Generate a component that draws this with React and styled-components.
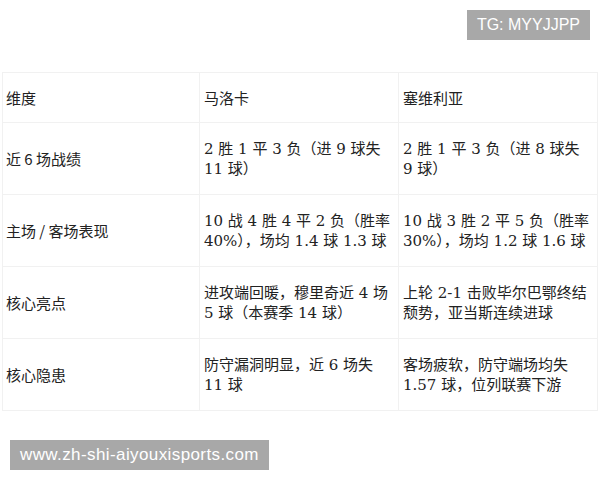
import React from 'react';
import styled, { createGlobalStyle } from 'styled-components';

const Global = createGlobalStyle`
  html, body {
    margin: 0;
    padding: 0;
    background: #fff;
  }
  body {
    width: 600px;
    height: 480px;
    overflow: hidden;
  }
`;

const Page = styled.div`
  display: flex;
  flex-direction: column;
  padding-top: 10px;
`;

const Mark = styled.div`
  align-self: ${p => (p.right ? 'flex-end' : 'flex-start')};
  margin: ${p => (p.right ? '0 10px 0 0' : '0 0 0 10px')};
  height: 30px;
  line-height: 30px;
  padding: 0 10px;
  background: #a8a8a8;
  color: #fff;
  font-family: 'Liberation Sans', Arial, sans-serif;
  font-size: ${p => (p.right ? '16px' : '17px')};
  letter-spacing: ${p => (p.right ? '0' : '0.4px')};
  white-space: nowrap;
`;

const Table = styled.table`
  margin: 32px 0 29px 2px;
  width: 595px;
  border-collapse: collapse;
  table-layout: fixed;
  color: #222;
`;

const Th = styled.th`
  height: 49px;
  padding: 0 4px 0 ${p => (p.first ? '3px' : '4px')};
  text-align: left;
  font-weight: normal;
  font-family: 'Noto Sans CJK SC', sans-serif;
  font-size: 15px;
  border: 1px solid #f1f1f1;
`;

const Label = styled.td`
  height: 71px;
  padding: 0 4px 0 3px;
  font-family: 'Noto Sans CJK SC', sans-serif;
  font-size: 15px;
  border: 1px solid #f1f1f1;
`;

const Td = styled.td`
  height: 71px;
  padding: 0 4px;
  font-family: 'DejaVu Serif', 'Noto Sans CJK SC', serif;
  font-size: 15px;
  line-height: 20px;
  border: 1px solid #f1f1f1;
`;

const rows = [
  ['近 6 场战绩', '2 胜 1 平 3 负（进 9 球失 11 球）', '2 胜 1 平 3 负（进 8 球失 9 球）'],
  ['主场 / 客场表现', '10 战 4 胜 4 平 2 负（胜率 40%），场均 1.4 球 1.3 球', '10 战 3 胜 2 平 5 负（胜率 30%），场均 1.2 球 1.6 球'],
  ['核心亮点', '进攻端回暖，穆里奇近 4 场 5 球（本赛季 14 球）', '上轮 2-1 击败毕尔巴鄂终结颓势，亚当斯连续进球'],
  ['核心隐患', '防守漏洞明显，近 6 场失 11 球', '客场疲软，防守端场均失 1.57 球，位列联赛下游'],
];

const App = () => (
  <Page>
    <Global />
    <Mark right>TG: MYYJJPP</Mark>
    <Table>
      <colgroup>
        <col style={{ width: 197 }} />
        <col style={{ width: 199 }} />
        <col style={{ width: 199 }} />
      </colgroup>
      <thead>
        <tr>
          <Th first>维度</Th>
          <Th>马洛卡</Th>
          <Th>塞维利亚</Th>
        </tr>
      </thead>
      <tbody>
        {rows.map(r => (
          <tr key={r[0]}>
            <Label>{r[0]}</Label>
            <Td>{r[1]}</Td>
            <Td>{r[2]}</Td>
          </tr>
        ))}
      </tbody>
    </Table>
    <Mark>www.zh-shi-aiyouxisports.com</Mark>
  </Page>
);

export default App;
